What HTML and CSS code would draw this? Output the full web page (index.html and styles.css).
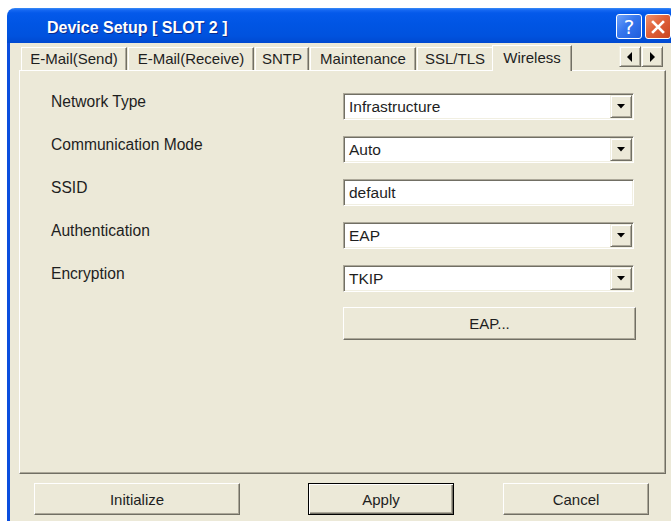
FILE: index.html
```html
<!DOCTYPE html>
<html>
<head>
<meta charset="utf-8">
<title>Device Setup</title>
<link rel="stylesheet" href="styles.css">
</head>
<body>
<div class="window">
  <div class="titlebar">
    <span class="title">Device Setup [ SLOT 2 ]</span>
    <div class="caption-buttons">
      <span class="cap-btn help">?</span>
      <span class="cap-btn close">
        <svg width="14" height="14" viewBox="0 0 14 14"><path d="M2 2 L12 12 M12 2 L2 12" stroke="#fff" stroke-width="2.6" stroke-linecap="square"/></svg>
      </span>
    </div>
  </div>
  <div class="client">
    <div class="tabstrip">
      <div class="tabs">
        <span class="tab t-send">E-Mail(Send)</span>
        <span class="tab t-recv">E-Mail(Receive)</span>
        <span class="tab t-sntp">SNTP</span>
        <span class="tab t-maint">Maintenance</span>
        <span class="tab t-ssl">SSL/TLS</span>
        <span class="tab active t-wifi">Wireless</span>
      </div>
      <div class="tab-scroll">
        <span class="scroll-btn"><svg width="6" height="10" viewBox="0 0 6 10"><path d="M5 0 L0 5 L5 10 Z" fill="#000"/></svg></span>
        <span class="scroll-btn"><svg width="6" height="10" viewBox="0 0 6 10"><path d="M1 0 L6 5 L1 10 Z" fill="#000"/></svg></span>
      </div>
    </div>
    <div class="panel">
      <div class="row">
        <span class="label">Network Type</span>
        <div class="field combo"><span class="value">Infrastructure</span><span class="drop"><svg width="8" height="5" viewBox="0 0 8 5"><path d="M0 0 H8 L4 4.5 Z" fill="#000"/></svg></span></div>
      </div>
      <div class="row">
        <span class="label">Communication Mode</span>
        <div class="field combo"><span class="value">Auto</span><span class="drop"><svg width="8" height="5" viewBox="0 0 8 5"><path d="M0 0 H8 L4 4.5 Z" fill="#000"/></svg></span></div>
      </div>
      <div class="row">
        <span class="label">SSID</span>
        <div class="field"><span class="value">default</span></div>
      </div>
      <div class="row">
        <span class="label">Authentication</span>
        <div class="field combo"><span class="value">EAP</span><span class="drop"><svg width="8" height="5" viewBox="0 0 8 5"><path d="M0 0 H8 L4 4.5 Z" fill="#000"/></svg></span></div>
      </div>
      <div class="row">
        <span class="label">Encryption</span>
        <div class="field combo"><span class="value">TKIP</span><span class="drop"><svg width="8" height="5" viewBox="0 0 8 5"><path d="M0 0 H8 L4 4.5 Z" fill="#000"/></svg></span></div>
      </div>
      <div class="row">
        <span class="label"></span>
        <span class="btn eap">EAP...</span>
      </div>
    </div>
    <div class="actions">
      <span class="btn btn-init">Initialize</span>
      <span class="btn btn-apply">Apply</span>
      <span class="btn btn-cancel">Cancel</span>
    </div>
  </div>
</div>
</body>
</html>
```
FILE: styles.css
```css
* { box-sizing: border-box; }

html, body {
  margin: 0;
  padding: 0;
  width: 671px;
  height: 521px;
  overflow: hidden;
  background: #fff;
}

body {
  font-family: "Liberation Sans", Arial, sans-serif;
  font-size: 15px;
  color: #1e1e1e;
}

/* window frame */
.window {
  margin: 8px 0 0 7px;
  width: 670px;
  height: 530px;
  display: flex;
  flex-direction: column;
}

.titlebar {
  flex: none;
  height: 35px;
  border-radius: 8px 8px 0 0;
  background: linear-gradient(#3a8cf6 0, #1668f2 2px, #0459ea 5px, #0055e4 45%, #0052de 80%, #0049d0 100%);
  display: flex;
  align-items: flex-start;
  padding-left: 40px;
}

.title {
  flex: 1;
  color: #fff;
  font-weight: bold;
  font-size: 16px;
  line-height: 20px;
  padding-top: 10px;
  text-shadow: 1px 1px 0 #0b2a8c;
}

.caption-buttons {
  display: flex;
  gap: 3px;
  margin: 6px 6px 0 0;
}

.cap-btn {
  width: 26px;
  height: 25px;
  border: 1px solid #fff;
  border-radius: 3px;
  display: flex;
  align-items: center;
  justify-content: center;
  color: #fff;
}

.help {
  background: linear-gradient(135deg, #6ea3fb 0%, #3676ee 45%, #1f5ddc 100%);
  font-size: 20px;
  font-family: "DejaVu Sans", sans-serif;
}

.close {
  background: linear-gradient(135deg, #f0926e 0%, #e0613a 45%, #c94420 100%);
}

.client {
  flex: 1;
  background: #ece9d8;
  border-left: 3px solid #0a4ede;
  border-right: 3px solid #0a4ede;
  display: flex;
  flex-direction: column;
}

/* tab strip */
.tabstrip {
  flex: none;
  height: 27px;
  display: flex;
  align-items: flex-end;
  justify-content: space-between;
  padding: 0 11px 0 11px;
  position: relative;
  z-index: 2;
}

.tabs {
  display: flex;
  align-items: flex-end;
  gap: 1px;
}

.tab {
  height: 23px;
  padding-top: 1px;
  line-height: 20px;
  text-align: center;
  white-space: nowrap;
  border-top: 1px solid #fff;
  border-left: 1px solid #fff;
  border-right: 1px solid #716f64;
  box-shadow: inset -1px 0 #aca899;
}

.t-send { width: 106px; }
.t-recv { width: 126px; }
.t-sntp { width: 54px; }
.t-maint { width: 106px; }
.t-ssl { width: 75px; border-right: none; box-shadow: none; }

.tab.active {
  width: 80px;
  height: 26px;
  margin-bottom: -1px;
  margin-left: -1px;
  padding-top: 2px;
  background: #ece9d8;
}

.tab-scroll {
  display: flex;
  margin-bottom: 3px;
}

.scroll-btn {
  width: 22px;
  height: 21px;
  display: flex;
  align-items: center;
  justify-content: center;
  background: #ece9d8;
  border: 1px solid;
  border-color: #f1efe2 #716f64 #716f64 #f1efe2;
  box-shadow: inset 1px 1px #fff, inset -1px -1px #aca899;
}

/* tab page */
.panel {
  flex: none;
  width: 647px;
  height: 404px;
  margin-left: 9px;
  border: 1px solid;
  border-color: #fff #716f64 #716f64 #fff;
  box-shadow: inset -1px -1px #aca899;
  padding: 22px 0 0 31px;
  position: relative;
  z-index: 1;
}

.row {
  height: 43px;
  display: grid;
  grid-template-columns: 292px 293px;
  align-items: start;
}

.label {
  font-size: 15.6px;
  line-height: 18px;
  white-space: nowrap;
}

.field {
  width: 291px;
  height: 27px;
  background: #fff;
  border: 1px solid;
  border-color: #aca899 #fff #fff #aca899;
  box-shadow: inset 1px 1px #716f64, inset -1px -1px #f1efe2;
  display: flex;
  align-items: stretch;
  padding: 1px;
}

.value {
  flex: 1;
  padding-left: 4px;
  font-size: 15.5px;
  line-height: 23px;
}

.drop {
  width: 22px;
  display: flex;
  align-items: center;
  justify-content: center;
  background: #ece9d8;
  border: 1px solid;
  border-color: #f1efe2 #716f64 #716f64 #f1efe2;
  box-shadow: inset 1px 1px #fff, inset -1px -1px #aca899;
}

/* push buttons */
.btn {
  display: flex;
  align-items: center;
  justify-content: center;
  background: #ece9d8;
  border: 1px solid;
  border-color: #fff #716f64 #716f64 #fff;
  box-shadow: inset -1px -1px #aca899;
}

.eap {
  width: 293px;
  height: 33px;
  margin-top: -1px;
}

.actions {
  display: flex;
  padding: 9px 0 0 24px;
}

.btn-init { width: 206px; height: 32px; }
.btn-apply {
  width: 146px;
  height: 32px;
  margin-left: 68px;
  border: 1px solid #000;
  box-shadow: inset 1px 1px #fff, inset -1px -1px #716f64, inset -2px -2px #aca899;
}
.btn-cancel { width: 146px; height: 32px; margin-left: 49px; }
```
